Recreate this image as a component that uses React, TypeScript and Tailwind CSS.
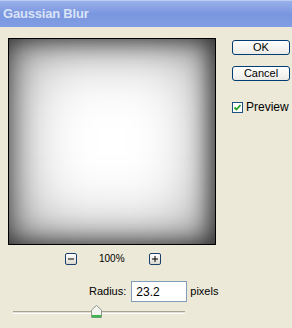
import React from 'react';

function XpButton({ label }: { label: string }) {
  return (
    <div className="w-[58px] h-[15px] rounded-[3px] border border-[#003c74] bg-gradient-to-b from-white to-[#ecebe6] flex items-center justify-center text-[11px] leading-none text-black">
      {label}
    </div>
  );
}

function ZoomButton({ sign }: { sign: '-' | '+' }) {
  return (
    <div className="w-[12px] h-[12px] rounded-[2px] border border-[#1c3f6e] bg-gradient-to-b from-white to-[#dcdad0] flex items-center justify-center">
      <svg width="6" height="6" viewBox="0 0 6 6">
        <rect x="0" y="2.5" width="6" height="1" fill="#000" />
        {sign === '+' && <rect x="2.5" y="0" width="1" height="6" fill="#000" />}
      </svg>
    </div>
  );
}

export default function App() {
  return (
    <div
      className="w-[292px] h-[328px] bg-[#ece9d8] overflow-hidden flex flex-col"
      style={{ fontFamily: '"Liberation Sans", Arial, sans-serif' }}
    >
      {/* title bar */}
      <div className="h-[27px] flex items-center px-[3px] bg-gradient-to-b from-[#98b0ea] via-[#7a96df] to-[#819de3] border-t border-[#bccdf4]">
        <span className="text-[13px] font-bold text-[#dbe4f8] tracking-[-0.2px]">Gaussian Blur</span>
      </div>

      <div className="flex flex-1">
        {/* left column */}
        <div className="flex flex-col pl-[8px] pt-[11px] w-[224px]">
          <div className="w-[208px] h-[207px] border border-black bg-white shadow-[inset_0_0_30px_rgba(0,0,0,0.6),inset_0_0_75px_rgba(0,0,0,0.5),inset_-6px_0_18px_rgba(0,0,0,0.35)]" />

          <div className="flex items-center mt-[8px] h-[12px]">
            <div className="ml-[57px]">
              <ZoomButton sign="-" />
            </div>
            <span className="ml-[22px] text-[10px] leading-none text-black">100%</span>
            <div className="ml-[24px]">
              <ZoomButton sign="+" />
            </div>
          </div>

          <div className="flex items-center mt-[16px] h-[21px]">
            <span className="ml-[81px] text-[11px] text-black">Radius:</span>
            <div className="ml-[5px] w-[56px] h-[21px] border border-[#7f9db9] bg-white flex items-center pl-[4px] text-[12px] text-black">
              23.2
            </div>
            <span className="ml-[3px] text-[11px] text-black">pixels</span>
          </div>

          <div className="relative mt-[9px] ml-[5px] w-[172px] h-[3px] border-t border-[#a6a495] border-b border-b-white bg-[#e4e1d2]">
            <svg className="absolute left-[78px] -top-[7px]" width="11" height="13" viewBox="0 0 11 13">
              <path d="M0.5 5 L5.5 0.5 L10.5 5 L10.5 12.5 L0.5 12.5 Z" fill="#f4f3ee" stroke="#8a9a8c" />
              <rect x="1" y="10" width="9" height="2.5" fill="#3fb34f" />
            </svg>
          </div>
        </div>

        {/* right column */}
        <div className="flex flex-col pt-[13px] pl-[8px]">
          <XpButton label="OK" />
          <div className="mt-[11px]">
            <XpButton label="Cancel" />
          </div>
          <div className="flex items-center mt-[17px]">
            <div className="w-[11px] h-[11px] border border-[#1c5180] bg-white flex items-center justify-center">
              <svg width="9" height="9" viewBox="0 0 9 9">
                <path d="M1.5 4.5 L3.5 6.5 L7.5 2" fill="none" stroke="#21a121" strokeWidth="1.8" />
              </svg>
            </div>
            <span className="ml-[3px] text-[12px] text-black">Preview</span>
          </div>
        </div>
      </div>
    </div>
  );
}
